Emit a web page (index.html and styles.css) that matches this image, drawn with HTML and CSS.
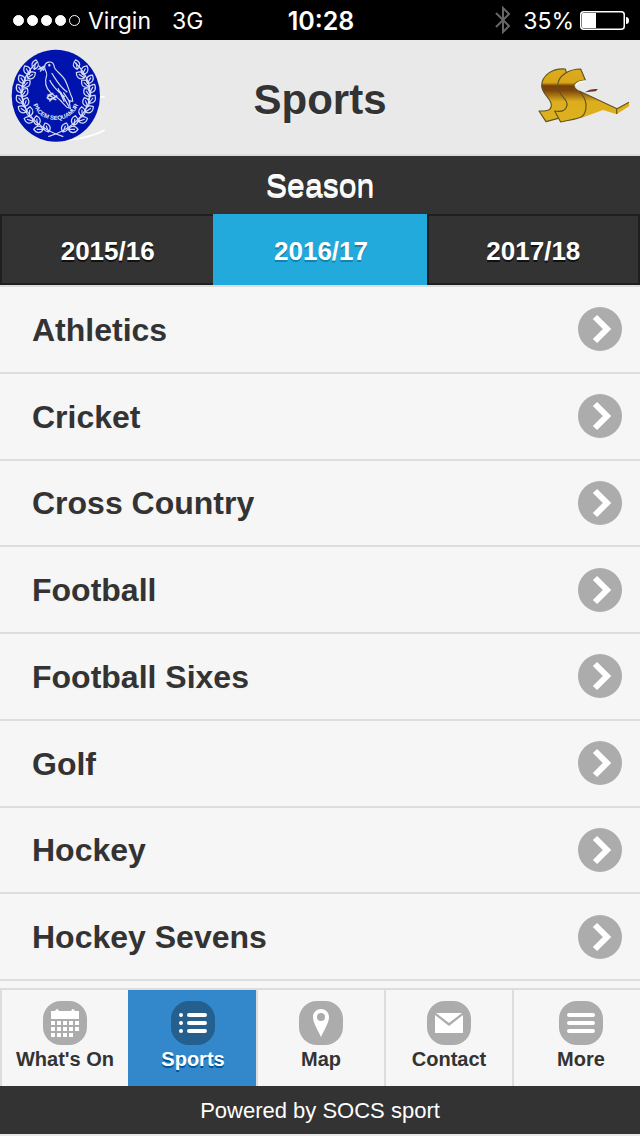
FILE: index.html
```html
<!DOCTYPE html>
<html lang="en">
<head>
<meta charset="utf-8">
<meta name="viewport" content="width=device-width, initial-scale=1">
<title>Sports</title>
<link rel="stylesheet" href="styles.css">
</head>
<body>
<svg class="defs" width="0" height="0" aria-hidden="true">
  <defs>
    <g id="leaf"><path d="M0 0C-13-8-13-20 0-29C13-20 13-8 0 0ZM0 0V-20"/></g>
    <g id="branch">
      <path d="M190 296C126 276 76 234 66 180C60 140 80 100 112 72"/>
      <use href="#leaf" transform="translate(103 94) rotate(10)"/>
      <use href="#leaf" transform="translate(88 109) rotate(-28)"/>
      <use href="#leaf" transform="translate(82 120) rotate(56)"/>
      <use href="#leaf" transform="translate(73 136) rotate(-32)"/>
      <use href="#leaf" transform="translate(69 147) rotate(46)"/>
      <use href="#leaf" transform="translate(66 164) rotate(-30)"/>
      <use href="#leaf" transform="translate(65 175) rotate(36)"/>
      <use href="#leaf" transform="translate(68 195) rotate(-38)"/>
      <use href="#leaf" transform="translate(72 206) rotate(20)"/>
      <use href="#leaf" transform="translate(79 222) rotate(-56)"/>
      <use href="#leaf" transform="translate(88 235) rotate(4)"/>
      <use href="#leaf" transform="translate(100 250) rotate(-72)"/>
      <use href="#leaf" transform="translate(113 262) rotate(-8)"/>
      <use href="#leaf" transform="translate(130 274) rotate(-90)"/>
      <use href="#leaf" transform="translate(146 282) rotate(-22)"/>
    </g>
    <linearGradient id="gold" x1="0" y1="54" x2="0" y2="216" gradientUnits="userSpaceOnUse">
      <stop offset="0" stop-color="#dfae1c"/>
      <stop offset=".27" stop-color="#d7a519"/>
      <stop offset=".33" stop-color="#764006"/>
      <stop offset=".42" stop-color="#80470a"/>
      <stop offset=".62" stop-color="#dcae1c"/>
      <stop offset="1" stop-color="#deb11e"/>
    </linearGradient>
    <symbol id="chevron" viewBox="0 0 44 44">
      <circle cx="22" cy="22" r="22" fill="#acacac"/>
      <path d="M17 10L29 22L17 34" fill="none" stroke="#fff" stroke-width="6"/>
    </symbol>
  </defs>
</svg>

<div class="status">
  <div class="status-left">
    <span class="signal"><i></i><i></i><i></i><i></i><i class="empty"></i></span>
    <span>Virgin</span>
    <span class="network">3G</span>
  </div>
  <div class="clock">10:28</div>
  <div class="status-right">
    <svg width="16" height="28" viewBox="0 0 16 28" fill="none" stroke="#666" stroke-width="2" aria-hidden="true"><path d="M1 7L14 20L8 26V2L14 8L1 21"/></svg>
    <span class="percent">35%</span>
    <svg width="49" height="19" viewBox="0 0 49 19" aria-hidden="true"><rect x=".75" y=".75" width="43.500" height="17.500" rx="3" fill="none" stroke="#fff" stroke-width="1.500"/><path d="M3 2H16V17H3Q2 17 2 16V3Q2 2 3 2Z" fill="#fff"/><path d="M46 6Q49 6 49 9.500Q49 13 46 13Z" fill="#fff"/></svg>
  </div>
</div>

<header class="header">
  <svg class="crest" width="112" height="114" viewBox="0 6 336 342" role="img" aria-label="School crest">
    <path d="M300 176L314 177M210 306Q274 298 314 276" fill="none" stroke="#fff" stroke-width="5"/>
    <ellipse cx="167.500" cy="173" rx="132.500" ry="138" fill="#0013ad"/>
    <g fill="none" stroke="#d5dcf8" stroke-width="3.500">
      <use href="#branch"/>
      <use href="#branch" transform="translate(335 0) scale(-1 1)"/>
      <path d="M134 87C134 70 158 66 162 83C163 98 181 104 194 124C205 143 208 164 217 181L218 190L207 188L211 211L201 208L188 195C179 181 162 174 151 163C137 149 134 129 140 112C143 103 133 98 134 87Z"/>
      <path d="M134 83L116 93L134 94M117 84L131 98M120 101L132 87M155 105C166 121 176 144 202 163M149 126C160 150 175 161 194 177M181 161L207 206M190 163L211 194M174 151L193 191"/>
      <path d="M160 166L146 171L157 176M172 173L157 181L169 185M147 171L141 181M158 180L148 190M142 181L154 186" stroke-width="5"/>
      <circle cx="148" cy="82" r="2"/>
    </g>
    <path id="motto-arc" d="M94 182Q108 244 167 246Q226 244 241 182" fill="none"/>
    <text class="motto"><textPath href="#motto-arc" startOffset="50%" text-anchor="middle">PACEM SEQUAMUR</textPath></text>
  </svg>
  <h1 class="title">Sports</h1>
  <svg class="brand" width="120" height="90" viewBox="0 6 360 270" role="img" aria-label="SOCS">
    <g stroke="#5f5424" stroke-width="3.500" stroke-linejoin="round">
      <path d="M176 122L291 176L326 157L328 168L290 193L249 180L184 204Z" fill="url(#gold)" stroke="none"/>
      <path d="M176 122L291 176L327 157M290 176V192" fill="none"/>
      <path d="M136 57C97 54 65 76 65 108C66 135 98 146 94 169C91 184 73 183 57 183L78 215L123 203L163 150L140 70Z" fill="url(#gold)"/>
      <path d="M182 57C148 57 113 76 113 108C114 138 145 145 141 166C137 185 119 186 104 183L122 216C150 211 170 207 182 202C199 193 202 164 194 146C188 134 180 127 172 121C165 116 162 111 163 106C166 93 182 91 196 90Z" fill="url(#gold)"/>
    </g>
    <path d="M165 109Q171 94 197 93" fill="none" stroke="#fff8df" stroke-width="4"/>
    <path d="M194 127Q211 115 234 117L227 124Z" fill="#6d3720"/>
  </svg>
</header>

<section class="season">
  <h2 class="season-title">Season</h2>
  <div class="season-tabs">
    <button type="button" class="season-tab">2015/16</button>
    <button type="button" class="season-tab active" aria-pressed="true">2016/17</button>
    <button type="button" class="season-tab">2017/18</button>
  </div>
</section>

<main class="content">
  <ul class="list">
    <li class="item"><a class="link" href="#athletics"><span>Athletics</span><svg class="arrow"><use href="#chevron"/></svg></a></li>
    <li class="item"><a class="link" href="#cricket"><span>Cricket</span><svg class="arrow"><use href="#chevron"/></svg></a></li>
    <li class="item"><a class="link" href="#cross-country"><span>Cross Country</span><svg class="arrow"><use href="#chevron"/></svg></a></li>
    <li class="item"><a class="link" href="#football"><span>Football</span><svg class="arrow"><use href="#chevron"/></svg></a></li>
    <li class="item"><a class="link" href="#football-sixes"><span>Football Sixes</span><svg class="arrow"><use href="#chevron"/></svg></a></li>
    <li class="item"><a class="link" href="#golf"><span>Golf</span><svg class="arrow"><use href="#chevron"/></svg></a></li>
    <li class="item"><a class="link" href="#hockey"><span>Hockey</span><svg class="arrow"><use href="#chevron"/></svg></a></li>
    <li class="item"><a class="link" href="#hockey-sevens"><span>Hockey Sevens</span><svg class="arrow"><use href="#chevron"/></svg></a></li>
  </ul>
</main>

<nav class="nav">
  <a class="nav-link" href="#whats-on"><svg class="nav-icon" viewBox="0 0 44 44" fill="#fff"><path d="M8 10H12Q14 6 16 10H28Q30 6 32 10H36V18H8Z"/><path d="M8 20h4v4h-4zM14 20h4v4h-4zM20 20h4v4h-4zM26 20h4v4h-4zM32 20h4v4h-4zM8 26h4v4h-4zM14 26h4v4h-4zM20 26h4v4h-4zM26 26h4v4h-4zM32 26h4v4h-4zM8 32h4v4h-4zM14 32h4v4h-4zM20 32h4v4h-4zM26 32h4v4h-4z"/></svg>What's On</a>
  <a class="nav-link active" href="#sports" aria-current="page"><svg class="nav-icon" viewBox="0 0 44 44" fill="none" stroke="#fff" stroke-width="4" stroke-linecap="round"><path d="M10 14H10.010M10 22H10.010M10 30H10.010M18 14H34M18 22H34M18 30H34"/></svg>Sports</a>
  <a class="nav-link" href="#map"><svg class="nav-icon" viewBox="0 0 44 44" fill="#fff"><path fill-rule="evenodd" d="M22 8C17 8 14 12 14 16C14 20 16 24 22 36C28 24 30 20 30 16C30 12 27 8 22 8ZM22 12A4 4 0 1 1 22 20A4 4 0 1 1 22 12Z"/></svg>Map</a>
  <a class="nav-link" href="#contact"><svg class="nav-icon" viewBox="0 0 44 44" fill="#fff"><path d="M9 12H35L22 22ZM8 14L22 25L36 14V32H8Z"/></svg>Contact</a>
  <a class="nav-link" href="#more"><svg class="nav-icon" viewBox="0 0 44 44" fill="none" stroke="#fff" stroke-width="4" stroke-linecap="round"><path d="M10 14H34M10 22H34M10 30H34"/></svg>More</a>
</nav>
<footer class="footer">Powered by SOCS sport</footer>
</body>
</html>
```
FILE: styles.css
```css
* { box-sizing: border-box; }

body {
  margin: 0;
  min-height: 100vh;
  display: flex;
  flex-direction: column;
  background: #f6f6f6;
  color: #333;
  font-family: "Liberation Sans", Arial, sans-serif;
}

.defs { position: absolute; }

.status {
  display: grid;
  grid-template-columns: 1fr auto 1fr;
  align-items: center;
  height: 40px;
  padding: 0 11px 0 13px;
  background: #000;
  color: #fff;
  font: 23px/38px Inter, sans-serif;
}

.status-left,
.status-right {
  display: flex;
  align-items: center;
}

.status-left span,
.percent { padding-top: 2px; }

.status-right { justify-content: flex-end; }

.status-left .signal {
  display: flex;
  gap: 3px;
  margin-right: 8px;
  padding: 0;
}

.signal i {
  width: 11px;
  height: 11px;
  border: 1px solid #fff;
  border-radius: 50%;
  background: #fff;
}

.signal .empty { background: none; }
.network { margin-left: 21px; }

.clock {
  padding-top: 2px;
  font-size: 25px;
  font-weight: 600;
}

.percent { margin: 0 6px 0 12px; }

.header {
  display: grid;
  grid-template-columns: 120px 1fr 120px;
  align-items: center;
  background: #e9e9e9;
  border-bottom: 2px solid #ddd;
}

.crest,
.brand { display: block; }

.motto {
  fill: #e2e7fb;
  font-size: 18px;
  font-weight: bold;
}

.title {
  margin: 0;
  padding-top: 6px;
  font-size: 42px;
  line-height: 56px;
  text-align: center;
  text-shadow: 0 2px 0 #eee;
}

.season {
  background: #333;
  color: #fff;
}

.season-title {
  margin: 0;
  font-size: 32px;
  font-weight: normal;
  line-height: 58px;
  text-align: center;
  text-shadow: 0 2px 0 #f3f3f3;
}

.season-tabs {
  display: grid;
  grid-template-columns: repeat(3, 1fr);
}

.season-tab {
  height: 71px;
  padding: 2px 0 0;
  border: 2px solid #1f1f1f;
  border-right-width: 0;
  background: #333;
  color: #fff;
  font: bold 26px/32px "Liberation Sans", Arial, sans-serif;
  text-shadow: 0 2px 0 #111;
}

.season-tab:last-child { border-right-width: 2px; }

.season-tab.active {
  border-color: #22aadd;
  background: #22aadd;
  text-shadow: 0 2px 0 #1682aa;
}

.content {
  flex: 1;
  display: flex;
  border-top: 2px solid #ddd;
  padding-bottom: 7px;
}

.list {
  flex: 1;
  display: grid;
  grid-auto-rows: 1fr;
  margin: 0;
  padding: 0;
  list-style: none;
}

.item {
  display: flex;
  border-bottom: 2px solid #ddd;
}

.link {
  flex: 1;
  display: flex;
  align-items: center;
  justify-content: space-between;
  padding: 0 18px 0 32px;
  color: #333;
  font-size: 32px;
  font-weight: bold;
  text-decoration: none;
  text-shadow: 0 2px 0 #f3f3f3;
}

.link span { padding-top: 2px; }

.arrow {
  width: 44px;
  height: 44px;
}

.nav {
  display: grid;
  grid-template-columns: repeat(5, 1fr);
  border-top: 2px solid #ddd;
}

.nav-link {
  display: flex;
  flex-direction: column;
  align-items: center;
  height: 96px;
  padding-top: 11px;
  border-left: 2px solid #ddd;
  color: #333;
  font-size: 20px;
  font-weight: bold;
  line-height: 28px;
  text-decoration: none;
}

.nav-link:last-child { padding-left: 8px; }

.nav-link.active {
  border-color: #3388cc;
  background: #3388cc;
  color: #fff;
  text-shadow: 0 2px 0 #005599;
}

.nav-icon {
  width: 44px;
  height: 44px;
  border-radius: 18px;
  background: #acacac;
}

.active .nav-icon { background: #255f8e; }

.footer {
  padding-top: 2px;
  border-bottom: 2px solid #e9e9e9;
  background: #333;
  color: #fff;
  font-size: 22px;
  line-height: 46px;
  text-align: center;
}
```
